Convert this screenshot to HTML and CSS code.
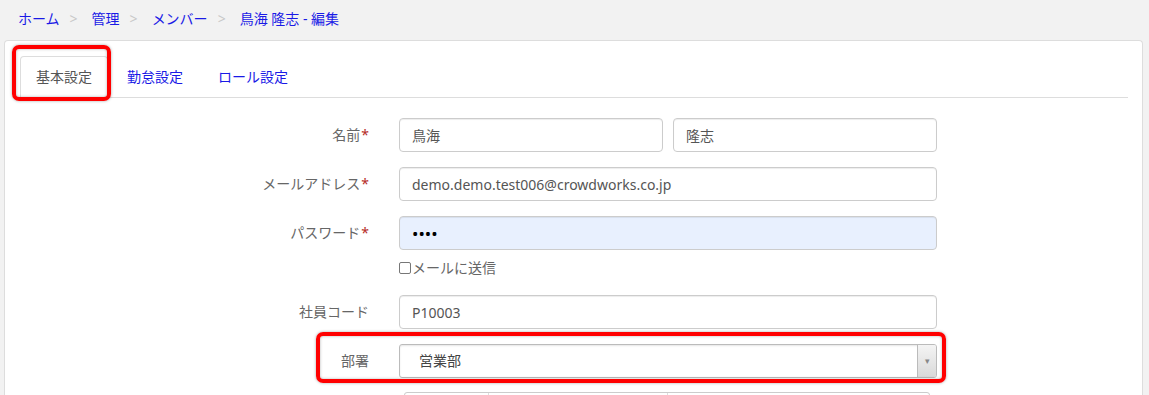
FILE: index.html
```html
<!DOCTYPE html>
<html lang="ja">
<head>
    <meta charset="UTF-8">
    <meta name="viewport" content="width=device-width, initial-scale=1.0">
    <title>メンバー編集</title>
    <link rel="stylesheet" href="styles.css">
</head>
<body>
    <ol class="breadcrumb">
        <li><a href="#">ホーム</a></li>
        <li class="sep">&gt;</li>
        <li><a href="#">管理</a></li>
        <li class="sep">&gt;</li>
        <li><a href="#">メンバー</a></li>
        <li class="sep">&gt;</li>
        <li><a href="#">鳥海&nbsp;隆志 - 編集</a></li>
    </ol>

    <div class="panel">
        <ul class="tabs">
            <li class="tab active">
                <a href="#">基本設定</a>
                <span class="mark mark-tab"></span>
            </li>
            <li class="tab"><a href="#">勤怠設定</a></li>
            <li class="tab"><a href="#">ロール設定</a></li>
        </ul>

        <form class="form">
            <div class="row">
                <label class="label">名前<span class="req">*</span></label>
                <div class="field split">
                    <input class="input" type="text" value="鳥海">
                    <input class="input" type="text" value="隆志">
                </div>
            </div>
            <div class="row">
                <label class="label">メールアドレス<span class="req">*</span></label>
                <div class="field">
                    <input class="input" type="text" value="demo.demo.test006@crowdworks.co.jp">
                </div>
            </div>
            <div class="row row-tight">
                <label class="label">パスワード<span class="req">*</span></label>
                <div class="field">
                    <input class="input input-filled" type="password" value="demo">
                    <label class="check"><input type="checkbox">メールに送信</label>
                </div>
            </div>
            <div class="row">
                <label class="label">社員コード</label>
                <div class="field">
                    <input class="input" type="text" value="P10003">
                </div>
            </div>
            <div class="row row-marked">
                <label class="label">部署</label>
                <div class="field">
                    <div class="select">
                        <span class="select-text">営業部</span>
                        <span class="select-btn">&#9662;</span>
                    </div>
                </div>
                <span class="mark mark-row"></span>
            </div>
            <div class="row row-last">
                <div class="label"></div>
                <div class="field">
                    <div class="cells">
                        <div class="cell"></div>
                        <div class="cell cell-mid"></div>
                        <div class="cell cell-wide"></div>
                    </div>
                </div>
            </div>
        </form>
    </div>
</body>
</html>
```

FILE: styles.css
```css
body {
    margin: 0;
    height: 395px;
    background-color: #f2f2f2;
    font-family: "Noto Sans", "Noto Sans CJK JP", sans-serif;
    font-size: 14px;
    line-height: 20px;
    color: #555;
    overflow: hidden;
}
a {
    color: #1a1ae6;
    text-decoration: none;
}

/* breadcrumb */
.breadcrumb {
    list-style: none;
    margin: 0;
    padding: 9px 18px 0;
    height: 31px;
    display: flex;
}
.breadcrumb .sep {
    color: #c8c8c8;
    margin: 0 14px 0 10px;
}

/* panel */
.panel {
    margin: 0 6px 0 4px;
    background: #fff;
    border: 1px solid #ddd;
    border-bottom: 0;
    border-radius: 4px 4px 0 0;
    padding: 15px 14px 0 10px;
    height: 339px;
    overflow: hidden;
}
.tabs {
    list-style: none;
    margin: 0;
    padding: 0 0 0 5px;
    display: flex;
    border-bottom: 1px solid #ddd;
}
.tab {
    position: relative;
    margin-bottom: -1px;
    margin-right: 3px;
}
.tab a {
    display: block;
    padding: 10px 15px;
    border: 1px solid transparent;
    border-radius: 4px 4px 0 0;
}
.tab.active a {
    color: #555;
    background: #fff;
    border-color: #ddd #ddd transparent;
}

/* red annotation boxes */
.mark {
    position: absolute;
    border: 4px solid #f00;
    border-radius: 7px;
    box-shadow: 0 0 3px rgba(0, 0, 0, 0.35), inset 0 0 3px rgba(0, 0, 0, 0.3);
    pointer-events: none;
}
.mark-tab {
    left: -8px;
    right: -3px;
    top: -11px;
    bottom: -3px;
}
.mark-row {
    left: 301px;
    width: 622px;
    top: -12px;
    height: 43px;
}

/* form */
.form {
    padding-top: 20px;
}
.row {
    position: relative;
    display: grid;
    grid-template-columns: 354px 538px;
    column-gap: 30px;
    margin-bottom: 15px;
}
.row-tight {
    margin-bottom: 17px;
}
.row-marked {
    margin-bottom: 14px;
}
.row-last {
    margin-bottom: 0;
}
.label {
    text-align: right;
    padding-top: 7px;
    color: #666;
}
.req {
    color: #b52b27;
    margin-left: 1px;
}
.split {
    display: grid;
    grid-template-columns: 1fr 1fr;
    column-gap: 10px;
}
.input {
    display: block;
    width: 100%;
    box-sizing: border-box;
    height: 34px;
    margin: 0;
    padding: 6px 12px;
    font: inherit;
    color: #555;
    background: #fff;
    border: 1px solid #ccc;
    border-radius: 4px;
    box-shadow: inset 0 1px 1px rgba(0, 0, 0, 0.075);
    outline: none;
}
.input-filled {
    background: #e8f0fe;
    color: #000;
    font-size: 17px;
}
.check {
    display: flex;
    align-items: center;
    margin-top: 8px;
    color: #666;
}
.check input {
    appearance: none;
    width: 12px;
    height: 12px;
    margin: 0 1px 0 0;
    border: 1px solid #777;
    border-radius: 2px;
    background: #fff;
}
.select {
    display: flex;
    height: 34px;
    box-sizing: border-box;
    border: 1px solid #bbb;
    border-radius: 3px;
    background: #fff;
    box-shadow: inset 0 1px 2px rgba(0, 0, 0, 0.1);
}
.select-text {
    flex: 1;
    padding: 6px 19px;
    color: #444;
}
.select-btn {
    width: 18px;
    border-left: 1px solid #bbb;
    border-radius: 0 2px 2px 0;
    background: linear-gradient(#f4f4f4, #d9d9d9);
    color: #888;
    font-size: 9px;
    line-height: 32px;
    text-align: center;
}
.cells {
    display: flex;
    margin-left: 5px;
    width: 524px;
    height: 30px;
    border: 1px solid #ccc;
    border-radius: 3px;
}
.cell {
    width: 83px;
}
.cell-mid {
    width: 178px;
    border-left: 1px solid #ddd;
}
.cell-wide {
    flex: 1;
    border-left: 1px solid #ddd;
}
```
